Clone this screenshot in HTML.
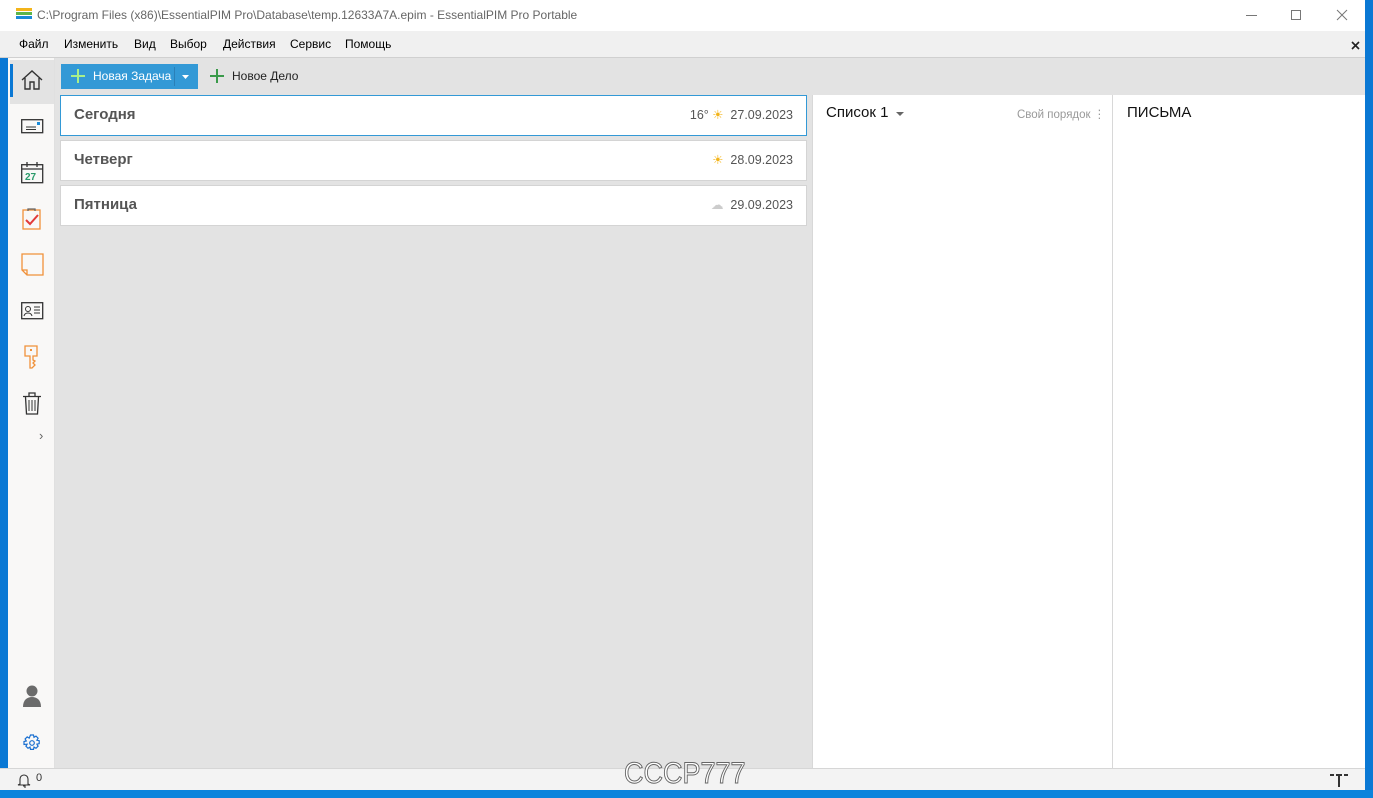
<!DOCTYPE html>
<html><head><meta charset="utf-8"><style>
*{margin:0;padding:0;box-sizing:border-box}
body{width:1373px;height:798px;overflow:hidden;background:#0a78d4;font-family:"Segoe UI","Liberation Sans","DejaVu Sans",sans-serif;position:relative}
.abs{position:absolute}
#title{left:0;top:0;width:1365px;height:31px;background:#fff}
#menu{left:0;top:31px;width:1365px;height:27px;background:#f0f0f0;border-bottom:1px solid #d0d0d0;font-size:12px;color:#000}
#menu span{position:absolute;top:6px}
#side{left:8px;top:58px;width:47px;height:710px;background:#f9f8f7;border-right:1px solid #e0e0e0}
#tool{left:55px;top:58px;width:1310px;height:37px;background:#e3e3e3}
#leftp{left:55px;top:95px;width:757px;height:673px;background:#e3e3e3}
.card{position:absolute;left:5px;width:747px;height:41px;background:#fff;border:1px solid #d4d4d4}
.card b{position:absolute;left:13px;top:10px;font-size:15px;color:#555;font-weight:bold}
.card i{position:absolute;right:13px;top:11px;font-style:normal;font-size:12.5px;color:#555}
#mid{left:812px;top:95px;width:301px;height:673px;background:#fff;border-left:1px solid #d8d8d8;border-right:1px solid #d8d8d8}
#right{left:1113px;top:95px;width:252px;height:673px;background:#fff}
#status{left:0;top:768px;width:1365px;height:22px;background:#f3f3f3;border-top:1px solid #d6d6d6}
</style></head><body>
<div class="abs" style="left:0;top:790px;width:1373px;height:8px;background:#0b84dc"></div>
<div id="title" class="abs">
 <svg class="abs" style="left:16px;top:8px" width="16" height="12"><rect x="0" y="0" width="16" height="3" fill="#f3b41a"/><rect x="0" y="4" width="16" height="3" fill="#5cb54a"/><rect x="0" y="8" width="16" height="3" fill="#1a8ad8"/></svg>
 <div class="abs" style="left:37px;top:8px;font-size:12px;color:#666">C:\Program Files (x86)\EssentialPIM Pro\Database\temp.12633A7A.epim - EssentialPIM Pro Portable</div>
 <div class="abs" style="left:1246px;top:15px;width:11px;height:1px;background:#777"></div>
 <div class="abs" style="left:1291px;top:10px;width:10px;height:10px;border:1px solid #777"></div>
 <svg class="abs" style="left:1336px;top:9px" width="12" height="12"><path d="M1 1L11 11M11 1L1 11" stroke="#777" stroke-width="1"/></svg>
</div>
<div id="menu" class="abs">
 <span style="left:19px">Файл</span><span style="left:64px">Изменить</span><span style="left:134px">Вид</span><span style="left:170px">Выбор</span><span style="left:223px">Действия</span><span style="left:290px">Сервис</span><span style="left:345px">Помощь</span>
 <svg class="abs" style="left:1351px;top:10px" width="9" height="9"><path d="M1 1L8 8M8 1L1 8" stroke="#222" stroke-width="1.6"/></svg>
</div>
<div id="side" class="abs">
 <div class="abs" style="left:2px;top:2px;width:44px;height:44px;background:#e3e3e3"></div>
 <div class="abs" style="left:2px;top:6px;width:3px;height:33px;background:#0a78d4"></div>
 <svg class="abs" style="left:12px;top:11px" width="24" height="22"><path d="M2 11L12 2L22 11M5 9V20H10V13H14V20H19V9" fill="none" stroke="#333" stroke-width="1.4"/></svg>
 <svg class="abs" style="left:13px;top:61px" width="24" height="16"><rect x="0.7" y="0.7" width="21" height="13" fill="none" stroke="#333" stroke-width="1.3"/><rect x="16" y="3" width="3" height="3" fill="#1a8ad8"/><path d="M5 8h10M5 10.5h10" stroke="#333"/></svg>
 <svg class="abs" style="left:13px;top:104px" width="23" height="22"><rect x="0.7" y="2.7" width="21" height="18" fill="none" stroke="#333" stroke-width="1.3"/><path d="M1 7h21M6 0v5M16 0v5" stroke="#333" stroke-width="1.3"/><text x="4" y="18" font-size="10" font-weight="bold" fill="#2a9a6a" font-family="Liberation Sans">27</text></svg>
 <svg class="abs" style="left:14px;top:148px" width="20" height="24"><rect x="1" y="4" width="17" height="19" fill="none" stroke="#f0913a" stroke-width="1.3"/><path d="M6 5V3h7v2" fill="none" stroke="#666" stroke-width="1.3"/><path d="M4 14l4 4 8-9" fill="none" stroke="#e23a3a" stroke-width="2"/></svg>
 <svg class="abs" style="left:13px;top:195px" width="23" height="23"><path d="M1 1H22V22H6L1 17Z M1 17H6V22" fill="none" stroke="#f0913a" stroke-width="1.3"/></svg>
 <svg class="abs" style="left:13px;top:244px" width="23" height="18"><rect x="0.7" y="0.7" width="21" height="16" fill="none" stroke="#333" stroke-width="1.3"/><circle cx="7" cy="7" r="2.5" fill="none" stroke="#333"/><path d="M3 14c1-4 7-4 8 0M13 5h6M13 8h6M13 11h6" fill="none" stroke="#333"/></svg>
 <svg class="abs" style="left:15px;top:287px" width="18" height="25"><path d="M2 1h12v10h-4v4l2 1-2 2 2 2-3 3h-2V11H2Z" fill="none" stroke="#f0913a" stroke-width="1.3"/><rect x="7" y="4" width="2" height="2" fill="#f0913a"/></svg>
 <svg class="abs" style="left:14px;top:333px" width="20" height="24"><path d="M1 5.5h18M7 5V2h6v3M3.5 6l1 17h11l1-17" fill="none" stroke="#333" stroke-width="1.3"/><path d="M7 9v11M10 9v11M13 9v11" stroke="#333" stroke-width="1"/></svg>
 <div class="abs" style="left:31px;top:370px;font-size:13px;color:#666">›</div>
 <svg class="abs" style="left:14px;top:627px" width="20" height="23"><circle cx="10" cy="6" r="5.5" fill="#6b6b6b"/><path d="M1 22c0-7 4-10 9-10s9 3 9 10Z" fill="#6b6b6b"/></svg>
 <svg class="abs" style="left:15px;top:676px" width="18" height="18" viewBox="0 0 18 18"><path d="M7.5 1h3l.5 2.3 2-1.2 2.1 2.1-1.2 2 2.3.5v3l-2.3.5 1.2 2-2.1 2.1-2-1.2-.5 2.3h-3l-.5-2.3-2 1.2-2.1-2.1 1.2-2L1 10.5v-3l2.3-.5-1.2-2 2.1-2.1 2 1.2Z" fill="none" stroke="#1a6fd0" stroke-width="1.2"/><circle cx="9" cy="9" r="2.3" fill="none" stroke="#1a6fd0" stroke-width="1.2"/></svg>
</div>
<div id="tool" class="abs">
 <div class="abs" style="left:6px;top:6px;width:137px;height:25px;background:#3399d6"></div>
 <div class="abs" style="left:119px;top:9px;width:1px;height:19px;background:#2a80b8"></div>
 <svg class="abs" style="left:15px;top:10px" width="16" height="16"><path d="M8 1v14M1 8h14" stroke="#a8f08a" stroke-width="2"/></svg>
 <div class="abs" style="left:38px;top:11px;font-size:12px;color:#fff">Новая Задача</div>
 <svg class="abs" style="left:127px;top:17px" width="7" height="4"><path d="M0 0h7L3.5 4Z" fill="#fff"/></svg>
 <svg class="abs" style="left:154px;top:10px" width="16" height="16"><path d="M8 1v14M1 8h14" stroke="#3a9a4a" stroke-width="2"/></svg>
 <div class="abs" style="left:177px;top:11px;font-size:12px;color:#222">Новое Дело</div>
</div>
<div id="leftp" class="abs">
 <div class="card" style="top:0;border-color:#3399d6"><b>Сегодня</b><i>16° <span style="color:#f3b41a">☀</span>&nbsp; 27.09.2023</i></div>
 <div class="card" style="top:45px"><b>Четверг</b><i><span style="color:#f3b41a">☀</span>&nbsp; 28.09.2023</i></div>
 <div class="card" style="top:90px"><b>Пятница</b><i><span style="color:#ccc">☁</span>&nbsp; 29.09.2023</i></div>
</div>
<div id="mid" class="abs">
 <div class="abs" style="left:13px;top:9px;font-size:15px;color:#111">Список 1</div>
 <svg class="abs" style="left:83px;top:17px" width="8" height="4"><path d="M0 0h8L4 4Z" fill="#666"/></svg>
 <div class="abs" style="left:204px;top:12px;font-size:11.5px;color:#999">Свой порядок ⋮</div>
</div>
<div id="right" class="abs">
 <div class="abs" style="left:14px;top:9px;font-size:15px;color:#111">ПИСЬМА</div>
</div>
<div id="status" class="abs">
 <svg class="abs" style="left:17px;top:4px" width="14" height="15"><path d="M3 11V6a4 4 0 0 1 8 0v5l2 1H1Z M6 13h2v2" fill="none" stroke="#333" stroke-width="1.1"/></svg>
 <div class="abs" style="left:36px;top:3px;font-size:11px;color:#333">0</div>
 <div class="abs" style="left:624px;top:-12px;font-size:30px;color:#fff;-webkit-text-stroke:1px #666;font-family:'Liberation Sans Narrow','Liberation Sans',sans-serif;transform:scaleX(0.9);transform-origin:left top;letter-spacing:0px">CCCP777</div>
 <svg class="abs" style="left:1330px;top:5px" width="18" height="14"><path d="M0 1h4M6 1h6M14 1h4M9 2v11" stroke="#333" stroke-width="2"/></svg>
</div>
</body></html>
